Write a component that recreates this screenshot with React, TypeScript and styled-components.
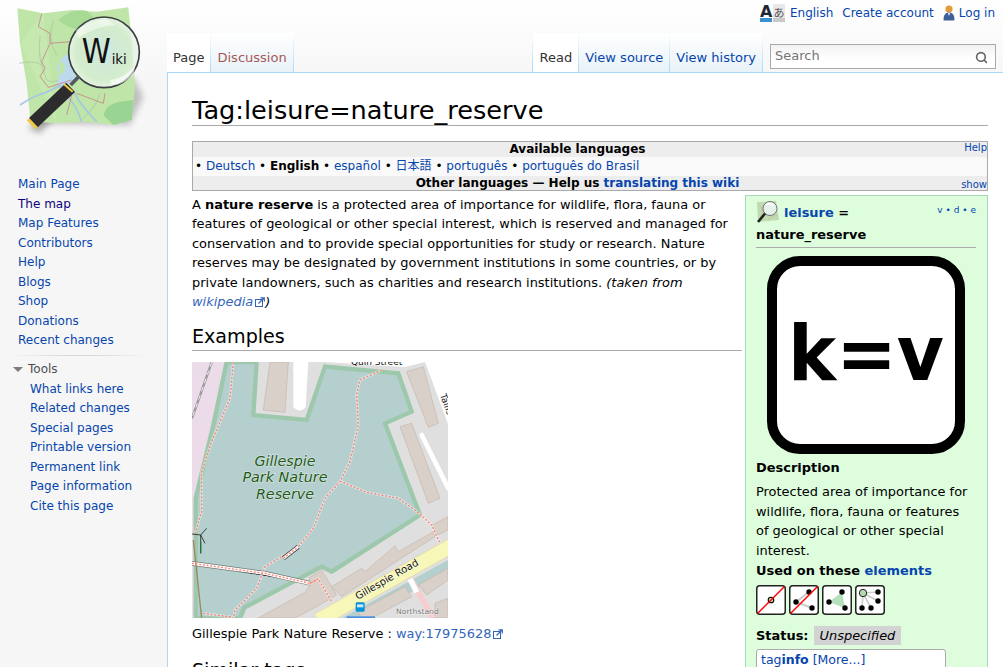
import React from "react";
import styled, { createGlobalStyle } from "styled-components";
import { Search } from "lucide-react";

const GlobalStyle = createGlobalStyle`
  html, body {
    margin: 0;
    height: 100%;
    overflow: hidden;
    background: #f6f6f6;
    font-family: "DejaVu Sans", "Noto Sans CJK JP", sans-serif;
    color: #000;
  }
  #root { height: 100%; }
  a { color: #0645ad; text-decoration: none; }
`;

const Page = styled.div`
  display: grid;
  grid-template-columns: 167px 1fr;
  height: 667px;
  overflow: hidden;
  background: linear-gradient(#fff 0, #f6f6f6 80px);
`;

const Sidebar = styled.aside`
  display: flex;
  flex-direction: column;
`;

const LogoWrap = styled.div`
  height: 175px;
`;

const NavList = styled.ul<{ $nested?: boolean }>`
  list-style: none;
  margin: 0;
  padding: 0 0 0 ${(p) => (p.$nested ? 30 : 18)}px;
  font-size: 12px;
  line-height: 19.5px;
`;

const NavLink = styled.a<{ $visited?: boolean }>`
  color: ${(p) => (p.$visited ? "#0b0080" : "#0645ad")};
`;

const NavDivider = styled.hr`
  border: 0;
  height: 1px;
  margin: 4px 18px 3px 10px;
  background: linear-gradient(90deg, #f6f6f6, #d8d8d8 40%, #d8d8d8 60%, #f6f6f6);
`;

const ToolsHead = styled.div`
  display: flex;
  align-items: center;
  gap: 5px;
  padding-left: 13px;
  font-size: 12px;
  line-height: 21px;
  color: #4d4d4d;
`;

const Caret = styled.span`
  width: 0;
  height: 0;
  border-left: 5px solid transparent;
  border-right: 5px solid transparent;
  border-top: 5px solid #7d7d7d;
`;

const Main = styled.div`
  display: flex;
  flex-direction: column;
  min-width: 0;
`;

const Personal = styled.nav`
  display: flex;
  justify-content: flex-end;
  align-items: center;
  gap: 9px;
  height: 25px;
  padding-right: 8px;
  font-size: 12px;
`;

const PersonalItem = styled.span`
  display: flex;
  align-items: center;
  gap: 4px;
`;

const TabBar = styled.div`
  display: flex;
  height: 48px;
  align-items: flex-end;
`;

const TabGroup = styled.div<{ $right?: boolean }>`
  display: flex;
  gap: 1px;
  height: 40px;
  padding-left: ${(p) => (p.$right ? "1px" : "0")};
  padding-right: 1px;
  margin-left: ${(p) => (p.$right ? "auto" : "0")};
  background: linear-gradient(#fff, #a7d7f9);
`;

const Tab = styled.a<{ $selected?: boolean; $missing?: boolean }>`
  display: flex;
  align-items: flex-start;
  padding: 17px 6px 0;
  font-size: 13px;
  line-height: 15px;
  color: ${(p) => (p.$selected ? "#333" : p.$missing ? "#a55858" : "#0645ad")};
  background: ${(p) =>
    p.$selected ? "#fff" : "linear-gradient(#fff 0, #e8f2f8 100%)"};
  border-bottom: ${(p) => (p.$selected ? "1px solid #fff" : "1px solid #a7d7f9")};
  box-sizing: border-box;
`;

const SearchBox = styled.div`
  display: flex;
  align-items: center;
  justify-content: space-between;
  box-sizing: border-box;
  width: 226px;
  height: 25px;
  margin: 0 7px 4px 7px;
  padding: 0 7px 0 4px;
  border: 1px solid #aaa;
  background: linear-gradient(#f2f2f2, #fff 60%);
  font-size: 13px;
  line-height: 20px;
  color: #757575;
`;

const SearchLabel = styled.span`
  margin-bottom: 2px;
`;

const SearchGlyph = styled(Search)`
  margin-top: 2px;
`;

const Content = styled.main`
  flex: 1;
  background: #fff;
  border-top: 1px solid #a7d7f9;
  border-left: 1px solid #a7d7f9;
  padding: 19px 15px 0 24px;
  font-size: 12.95px;
  line-height: 19.4px;
  margin-top: -1px;
  position: relative;
  z-index: 0;
`;

const Title = styled.h1`
  margin: 0 0 15px;
  padding-top: 3px;
  font-size: 25.6px;
  font-weight: 400;
  line-height: 30px;
  border-bottom: 1px solid #aaa;
`;

const LangBox = styled.div`
  border: 1px solid #aaa;
  font-size: 12px;
  line-height: 14.5px;
  margin-bottom: 4px;
`;

const LangRow = styled.div<{ $shade?: boolean; $center?: boolean }>`
  position: relative;
  padding: ${(p) => (p.$shade ? "0 25px 0 0" : "2px 2px 2.5px")};
  background: ${(p) => (p.$shade ? "#ededed" : "#f9f9f9")};
  text-align: ${(p) => (p.$center ? "center" : "left")};
  font-weight: ${(p) => (p.$shade ? 700 : 400)};
`;

const LangCorner = styled.a<{ $bottom?: boolean }>`
  position: absolute;
  right: 0;
  ${(p) => (p.$bottom ? "bottom: -2px;" : "top: -1px;")}
  font-size: 10px;
  font-weight: 400;
`;

const InfoBox = styled.aside`
  float: right;
  box-sizing: border-box;
  width: 243px;
  margin-left: 3px;
  padding: 4px 11px 0 10px;
  background: #ddfddd;
  border: 1px solid #a9d8b8;
  border-bottom: 0;
  height: 480px;
`;

const InfoHead = styled.div`
  position: relative;
  font-weight: 700;
  line-height: 20px;
  padding-bottom: 2px;
  border-bottom: 1px solid #aaa;
  margin-bottom: 8px;
`;

const InfoHeadLine = styled.div`
  display: flex;
  align-items: center;
  gap: 4px;
  height: 25px;
`;

const Vde = styled.span`
  position: absolute;
  right: 0;
  top: 0;
  font-size: 9px;
  font-weight: 400;
  color: #0645ad;
`;

const BigIconWrap = styled.div`
  display: flex;
  justify-content: center;
  margin-bottom: 4px;
`;

const InfoLabel = styled.div<{ $tall?: boolean }>`
  font-weight: 700;
  margin: ${(p) => (p.$tall ? "1px 0 5px" : "0 0 5px")};
`;

const InfoText = styled.p`
  margin: 0;
  max-width: 216px;
`;

const ElementIcons = styled.div`
  display: flex;
  gap: 3px;
  margin-bottom: 10px;
`;

const StatusRow = styled.div`
  display: flex;
  align-items: center;
  gap: 5px;
  font-weight: 700;
  height: 20px;
  margin-bottom: 4px;
`;

const StatusBadge = styled.span`
  background: #d3d3d3;
  padding: 0 6px;
  font-weight: 400;
  font-style: italic;
`;

const TagInfoBox = styled.div`
  box-sizing: border-box;
  width: 190px;
  height: 40px;
  padding: 0 4px;
  background: #fff;
  border: 1px solid #aaa;
  border-radius: 3px;
  font-size: 12.5px;
`;

const Para = styled.p`
  margin: 0 0 13px;
`;

const External = styled.a`
  color: #3366bb;
`;

const ExternalGlyph = styled.svg`
  margin-left: 2px;
  vertical-align: -1px;
`;

const Heading = styled.h2`
  margin: 0 0 11px;
  font-size: 19.1px;
  font-weight: 400;
  line-height: 26px;
  overflow: hidden;
  border-bottom: 1px solid #aaa;
`;

const Figure = styled.figure`
  margin: 0 0 14px;
  width: 400px;
`;

const FigureImage = styled.div`
  width: 256px;
  height: 256px;
  margin-bottom: 6px;
`;

const ExternalIcon = () => (
  <ExternalGlyph width="10" height="10" viewBox="0 0 10 10">
    <rect x="0.5" y="2.5" width="7" height="7" fill="#fff" stroke="#36b" />
    <path d="M3.5 6.5 9 1M5.5 0.8H9.3V4.5" fill="none" stroke="#36b" strokeWidth="1.2" />
  </ExternalGlyph>
);

const TranslateIcon = () => (
  <svg width="26" height="20" viewBox="0 0 26 20">
    <rect x="13" y="1" width="12" height="15" fill="#e8e8e8" />
    <rect x="13" y="15" width="12" height="4" fill="#c9c9c9" />
    <text x="13.5" y="14" fontSize="11" fill="#555" fontFamily="Noto Sans CJK JP, sans-serif">あ</text>
    <text x="0" y="14" fontSize="16" fontWeight="700" fill="#1d2733" fontFamily="DejaVu Sans, sans-serif">A</text>
    <rect x="0" y="15" width="12" height="4" fill="#3a8fd0" />
  </svg>
);

const UserIcon = () => (
  <svg width="12" height="16" viewBox="0 0 12 16">
    <circle cx="6" cy="4" r="3.6" fill="#e39a3c" />
    <path d="M0.6 15.5C0.3 10 2.5 7.6 6 7.6S11.7 10 11.4 15.5Z" fill="#3f5f98" />
    <path d="M4.8 8h2.4L6 11Z" fill="#e8eef6" />
  </svg>
);

// drawn in the 3x crop's units, so coordinates read straight off the reference
const Logo = () => (
  <svg width="167" height="160" viewBox="0 0 501 480">
    <defs>
      <filter id="logoBlur" x="-20%" y="-20%" width="140%" height="140%">
        <feGaussianBlur stdDeviation="9" />
      </filter>
      <radialGradient id="lensGlass" cx="50%" cy="50%" r="55%">
        <stop offset="0" stopColor="#d4e6f3" stopOpacity="0.75" />
        <stop offset="0.7" stopColor="#dcefdc" stopOpacity="0.7" />
        <stop offset="1" stopColor="#f2f9f2" stopOpacity="0.95" />
      </radialGradient>
    </defs>
    <path d="M100 370 L390 375 L430 290 L400 230 L240 300Z" fill="#000" opacity="0.22" filter="url(#logoBlur)" />
    <path d="M85 385 L120 400 L235 270 L215 250Z" fill="#000" opacity="0.3" filter="url(#logoBlur)" />
    <path
      d="M52 25 L130 40 L215 30 L290 35 L385 22 L395 120 L405 260 L395 360 L340 375 L250 365 L170 370 L105 365 L90 350 L80 250 L60 130Z"
      fill="#bfe6a8"
    />
    <path d="M175 60 Q215 25 260 32 L300 70 L270 90 Q215 95 175 60Z" fill="#a6da95" />
    <path d="M130 40 L170 370 L60 130Z" fill="#c9ebb4" opacity="0.6" />
    <path d="M310 345 Q320 310 360 305 L400 300 L395 360 L340 375Z" fill="#99d495" />
    <path d="M120 110 Q110 170 140 240 Q170 260 200 210 M160 60 Q140 120 170 165 M58 190 Q100 180 125 195 M250 355 Q290 320 300 280" fill="none" stroke="#a9bca0" strokeWidth="2" />
    <path d="M60 315 Q90 295 115 285 Q150 275 175 258 Q215 255 235 300 Q265 340 290 365 M175 258 Q230 310 245 365" fill="none" stroke="#a4c6e6" strokeWidth="5" />
    <path d="M170 205 Q190 160 205 165 L230 240 Q190 265 170 250 Q185 225 170 205Z" fill="#bcd9ee" />
    <path d="M180 190 Q195 180 195 200 Q195 225 178 222Z" fill="#bfe6a8" />
    <path
      d="M125 42 L115 80 L150 100 L150 130 L125 185 L135 205 L120 230 L145 262 L215 240 M150 130 L215 125 M215 285 L200 345 M230 280 L310 310 L315 280"
      fill="none"
      stroke="#c9858a"
      strokeWidth="2.6"
    />
    <circle cx="312" cy="157" r="106" fill="url(#lensGlass)" stroke="#3b3f42" strokeWidth="5" />
    <path d="M330 240 Q370 235 405 200 L400 225 Q370 255 335 256Z" fill="#fff" opacity="0.6" />
    <path d="M228 90 Q270 60 320 58 L345 75 Q280 80 235 115Z" fill="#fff" opacity="0.5" />
    <text x="245" y="190" fontSize="103" fill="#111" fontFamily="DejaVu Sans, sans-serif" textLength="87" lengthAdjust="spacingAndGlyphs">W</text>
    <text x="335" y="192" fontSize="40" fill="#111" fontFamily="DejaVu Sans, sans-serif" textLength="45" lengthAdjust="spacingAndGlyphs">iki</text>
    <path d="M238 228 L212 255" stroke="#55585c" strokeWidth="11" />
    <path d="M212 262 L100 368" stroke="#2c2c2e" strokeWidth="38" />
    <path d="M192 253 L218 275" stroke="#f0c83c" strokeWidth="6" />
    <path d="M84 358 L110 384" stroke="#f0c83c" strokeWidth="9" />
  </svg>
);

const SmallLens = () => (
  <svg width="24" height="25" viewBox="0 0 24 25">
    <path d="M1 2 L20 1 L23 20 L2 22Z" fill="#bfdcae" />
    <path d="M3 5 Q9 10 4 18 M12 20 Q18 14 22 16" fill="none" stroke="#d8a6a0" strokeWidth="0.6" />
    <circle cx="14" cy="8.5" r="7" fill="#e6f1ec" stroke="#6d7476" />
    <path d="M10 5 Q14 2 18 6" fill="none" stroke="#fff" strokeWidth="1.5" />
    <path d="M9 13.5 L2 22" stroke="#222" strokeWidth="2.6" />
  </svg>
);

const KeyValueIcon = () => (
  <svg width="198" height="198" viewBox="0 0 198 198">
    <rect x="5" y="5" width="188" height="188" rx="28" fill="#fff" stroke="#000" strokeWidth="10" />
    <text x="99" y="124" textAnchor="middle" fontSize="76" fontWeight="700" fill="#000" fontFamily="DejaVu Sans, sans-serif" textLength="156" lengthAdjust="spacingAndGlyphs">
      k=v
    </text>
  </svg>
);

const ElementFrame = ({ children }: { children: React.ReactNode }) => (
  <svg width="30" height="30" viewBox="0 0 30 30">
    <rect x="0.75" y="0.75" width="28.5" height="28.5" rx="3" fill="#fff" stroke="#222" strokeWidth="1.5" />
    {children}
  </svg>
);

const Strike = () => <path d="M1.5 28.5 L28.5 1.5" stroke="#f00" strokeWidth="1.4" />;
const Dot = ({ x, y }: { x: number; y: number }) => <circle cx={x} cy={y} r="2.7" fill="#000" />;

const NodeIcon = () => (
  <ElementFrame>
    <circle cx="15" cy="15" r="2.8" fill="#b5d8b0" stroke="#000" strokeWidth="1.1" />
    <Strike />
  </ElementFrame>
);

const WayIcon = () => (
  <ElementFrame>
    <path d="M20 7 L7 17 L23 23" fill="none" stroke="#ccc" strokeWidth="2" />
    <Dot x={20} y={7} />
    <Dot x={7} y={17} />
    <Dot x={23} y={23} />
    <Strike />
  </ElementFrame>
);

const AreaIcon = () => (
  <ElementFrame>
    <path d="M20 7 L7 17 L23 23Z" fill="#b5e0bc" />
    <Dot x={20} y={7} />
    <Dot x={7} y={17} />
    <Dot x={23} y={23} />
  </ElementFrame>
);

const RelationIcon = () => (
  <ElementFrame>
    <path d="M8 8 L23 7 M8 8 L23 16 M8 8 L7 23 M8 8 L16 23" stroke="#ccc" strokeWidth="1.6" />
    <circle cx="8" cy="8" r="3.7" fill="#b5d8b0" stroke="#222" strokeWidth="1" />
    <Dot x={23} y={7} />
    <Dot x={23} y={16} />
    <Dot x={7} y={23} />
    <Dot x={16} y={23} />
  </ElementFrame>
);

const FOOTPATHS = [
  "M145 22 L135 130 L80 260 L50 350 L50 470 L30 535",
  "M590 45 L525 75 L515 120 L520 210 L495 320 L465 380 L420 430 L385 520 L340 575 L240 635 L215 700 L150 765 L145 790",
  "M465 378 L545 412 L640 430 L690 465 L740 510 L765 565",
  "M55 775 L145 787",
  "M375 685 L400 672 L440 740",
];

const BUILDINGS = [
  "M255 21 H310 L300 172 L235 165Z",
  "M665 50 L715 35 L760 205 L730 217Z",
  "M645 215 L680 205 L765 430 L730 445Z",
  "M220 789 L360 712 L375 690 L372 668 L410 645 L455 720 L400 752 L330 789Z",
  "M440 695 L530 640 L540 650 L610 590 L630 572 L640 590 L745 530 L750 545 L470 725Z",
  "M742 510 L789 485 V525 L758 540Z",
  "M520 770 L660 695 L680 725 L560 789 H530Z",
  "M700 690 L789 640 V675 L725 720Z",
  "M750 745 L789 730 V789 H750Z",
];

const NatureMap = () => (
  <svg width="256" height="256" viewBox="21 21 768 768">
    <rect x="21" y="21" width="768" height="768" fill="#e0dfdf" />
    <path d="M21 21 H125 L85 210 L30 430 V790 H21Z" fill="#ecdce9" />
    <path d="M80 22 L21 190" stroke="#999" strokeWidth="7" />
    <path d="M80 22 L21 190" stroke="#eee" strokeWidth="3" strokeDasharray="14 12" />
    <path
      d="M125 21 L85 210 L32 430 L32 790 H165 L178 758 L410 635 L440 650 L705 480 L600 205 L680 170 L640 55 L420 35 L365 195 L205 180 L215 21Z"
      fill="#b5cfcf"
      stroke="#9dc8ac"
      strokeWidth="13"
    />
    <path d="M325 21 H370 L362 155 Q345 178 325 155Z" fill="#fff" />
    <path d="M420 21 L660 36 L720 21Z" fill="#fff" />
    <path d="M720 21 H790 V210 Z" fill="#fff" />
    <path d="M710 240 L790 400" stroke="#fff" strokeWidth="14" strokeLinecap="round" />
    <path d="M470 789 L670 680 L789 615 V640 L560 789Z" fill="#b5cfcf" />
    {BUILDINGS.map((d) => (
      <path key={d} d={d} fill="#d9d0c9" stroke="#c4b6ab" strokeWidth="2" />
    ))}
    <path d="M400 796 L800 572" stroke="#e0d9a0" strokeWidth="46" />
    <path d="M400 796 L800 572" stroke="#f7f7ba" strokeWidth="42" />
    <path d="M675 670 L745 790" stroke="#f5cfcf" strokeWidth="18" />
    <path d="M675 672 L695 712" stroke="#fff" strokeWidth="16" />
    <path d="M21 625 L240 655 L375 685" stroke="#777" strokeWidth="14" />
    <path d="M21 625 L240 655 L375 685" stroke="#fff" strokeWidth="10" />
    <path d="M25 555 L50 790" stroke="#9a8a60" strokeWidth="4" />
    {FOOTPATHS.map((d) => (
      <g key={d} fill="none">
        <path d={d} stroke="#fff" strokeOpacity="0.45" strokeWidth="8" />
        <path d={d} stroke="#fa8072" strokeWidth="4" strokeDasharray="6 5" />
      </g>
    ))}
    <path d="M21 625 L240 655 L375 685 L400 672" fill="none" stroke="#fa8072" strokeWidth="4" strokeDasharray="6 5" />
    <path d="M295 610 L340 575" stroke="#333" strokeWidth="13" />
    <path d="M295 610 L340 575" stroke="#fff" strokeWidth="9" />
    <path d="M295 610 L340 575" stroke="#fa8072" strokeWidth="4" strokeDasharray="6 5" />
    <path d="M21 537 L47 540 L65 520 M47 540 L60 565 M47 540 V595" fill="none" stroke="#222" strokeWidth="2.5" />
    <path d="M47 560 V595" stroke="#1b7a3a" strokeWidth="4" />
    <g fontFamily="DejaVu Sans, sans-serif" fontStyle="italic" fontSize="43" fill="#1f5a16" stroke="#fff" strokeOpacity="0.6" strokeWidth="3" paintOrder="stroke" textAnchor="middle">
      <text x="300" y="332">Gillespie</text>
      <text x="300" y="382">Park Nature</text>
      <text x="300" y="432">Reserve</text>
    </g>
    <g fontFamily="DejaVu Sans, sans-serif" fontSize="30" fill="#111" stroke="#fff" strokeOpacity="0.6" strokeWidth="3" paintOrder="stroke">
      <text transform="translate(518 735) rotate(-30)">Gillespie Road</text>
      <text transform="translate(498 30)" fontSize="27">Quin Street</text>
      <text transform="translate(765 120) rotate(70)" fontSize="27">Tallis</text>
      <text x="633" y="776" fontSize="23" fill="#777">Northstand</text>
    </g>
    <rect x="512" y="742" width="27" height="28" rx="4" fill="#0092da" />
    <rect x="516" y="748" width="19" height="9" fill="#cfe9f6" />
    <rect x="485" y="784" width="85" height="5" fill="#4a8ee0" />
  </svg>
);

const NAV_LINKS = ["Main Page", "The map", "Map Features", "Contributors", "Help", "Blogs", "Shop", "Donations", "Recent changes"];
const TOOL_LINKS = ["What links here", "Related changes", "Special pages", "Printable version", "Permanent link", "Page information", "Cite this page"];

const App = () => (
  <>
    <GlobalStyle />
    <Page>
      <Sidebar>
        <LogoWrap>
          <Logo />
        </LogoWrap>
        <NavList>
          {NAV_LINKS.map((label) => (
            <li key={label}>
              <NavLink href="#" $visited={label === "The map"}>
                {label}
              </NavLink>
            </li>
          ))}
        </NavList>
        <NavDivider />
        <ToolsHead>
          <Caret />
          Tools
        </ToolsHead>
        <NavList $nested>
          {TOOL_LINKS.map((label) => (
            <li key={label}>
              <a href="#">{label}</a>
            </li>
          ))}
        </NavList>
      </Sidebar>
      <Main>
        <Personal>
          <PersonalItem>
            <TranslateIcon />
            <a href="#">English</a>
          </PersonalItem>
          <PersonalItem>
            <a href="#">Create account</a>
          </PersonalItem>
          <PersonalItem>
            <UserIcon />
            <a href="#">Log in</a>
          </PersonalItem>
        </Personal>
        <TabBar>
          <TabGroup>
            <Tab $selected>Page</Tab>
            <Tab $missing href="#">
              Discussion
            </Tab>
          </TabGroup>
          <TabGroup $right>
            <Tab $selected>Read</Tab>
            <Tab href="#">View source</Tab>
            <Tab href="#">View history</Tab>
          </TabGroup>
          <SearchBox>
            <SearchLabel>Search</SearchLabel>
            <SearchGlyph size={13} strokeWidth={3} color="#666" />
          </SearchBox>
        </TabBar>
        <Content>
          <Title>Tag:leisure=nature_reserve</Title>
          <LangBox>
            <LangRow $shade $center>
              Available languages
              <LangCorner href="#">Help</LangCorner>
            </LangRow>
            <LangRow>
              • <a href="#">Deutsch</a> • <strong>English</strong> • <a href="#">español</a> • <a href="#">日本語</a> •{" "}
              <a href="#">português</a> • <a href="#">português do Brasil</a>
            </LangRow>
            <LangRow $shade $center>
              Other languages — Help us <a href="#">translating this wiki</a>
              <LangCorner href="#" $bottom>
                show
              </LangCorner>
            </LangRow>
          </LangBox>
          <InfoBox>
            <InfoHead>
              <InfoHeadLine>
                <SmallLens />
                <span>
                  <a href="#">leisure</a> =
                </span>
              </InfoHeadLine>
              nature_reserve
              <Vde>v • d • e</Vde>
            </InfoHead>
            <BigIconWrap>
              <KeyValueIcon />
            </BigIconWrap>
            <InfoLabel>Description</InfoLabel>
            <InfoText>Protected area of importance for wildlife, flora, fauna or features of geological or other special interest.</InfoText>
            <InfoLabel $tall>
              Used on these <a href="#">elements</a>
            </InfoLabel>
            <ElementIcons>
              <NodeIcon />
              <WayIcon />
              <AreaIcon />
              <RelationIcon />
            </ElementIcons>
            <StatusRow>
              Status:
              <StatusBadge>Unspecified</StatusBadge>
            </StatusRow>
            <TagInfoBox>
              <a href="#">
                tag<strong>info</strong> [More...]
              </a>
            </TagInfoBox>
          </InfoBox>
          <Para>
            A <strong>nature reserve</strong> is a protected area of importance for wildlife, flora, fauna or features of geological or other
            special interest, which is reserved and managed for conservation and to provide special opportunities for study or research. Nature
            reserves may be designated by government institutions in some countries, or by private landowners, such as charities and research
            institutions.{" "}
            <em>
              (taken from <External href="#">wikipedia<ExternalIcon /></External>)
            </em>
          </Para>
          <Heading>Examples</Heading>
          <Figure>
            <FigureImage>
              <NatureMap />
            </FigureImage>
            <figcaption>
              Gillespie Park Nature Reserve : <External href="#">way:17975628<ExternalIcon /></External>
            </figcaption>
          </Figure>
          <Heading>Similar tags</Heading>
        </Content>
      </Main>
    </Page>
  </>
);

export default App;
